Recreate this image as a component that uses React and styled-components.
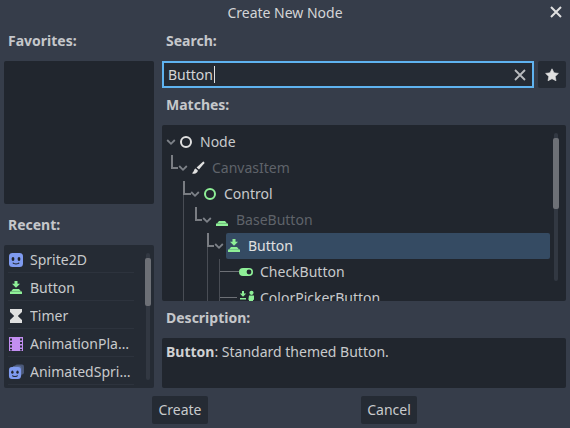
import React from "react";
import styled, { createGlobalStyle } from "styled-components";

const Global = createGlobalStyle`
  html, body { margin: 0; padding: 0; background: #363d4a; }
  body { width: 570px; height: 428px; overflow: hidden; font-family: "Noto Sans", sans-serif; font-size: 14px; color: #e0e0e0; }
`;

const Dialog = styled.div`
  width: 570px;
  height: 428px;
  background: #363d4a;
  display: flex;
  flex-direction: column;
`;
const TitleBar = styled.div`
  height: 24px;
  flex: none;
  display: flex;
  align-items: center;
  justify-content: center;
  position: relative;
  color: #d4d5d7;
  font-size: 14px;
`;
const CloseBtn = styled.svg`
  position: absolute;
  right: 8px;
  top: 6px;
`;
const Body = styled.div`
  flex: none;
  height: 364px;
  padding: 0 4px;
  display: grid;
  grid-template-columns: 150px 404px;
  column-gap: 8px;
`;
const Column = styled.div`
  display: flex;
  flex-direction: column;
  height: 364px;
`;
const Label = styled.div`
  font-weight: 700;
  font-size: 14px;
  color: #c5c7ca;
  height: 37px;
  flex: none;
  line-height: 34px;
  padding-left: 4px;
  margin-top: ${p => p.$top || 0}px;
`;
const Panel = styled.div`
  background: #21262e;
  border-radius: 2px;
  height: ${p => p.$h}px;
  flex: none;
  position: relative;
  overflow: hidden;
`;
const RecentList = styled.div`
  background: #252b34;
  height: 143px;
`;
const RecentRow = styled.div`
  height: 28px;
  margin: 0 20px 0 4px;
  padding-top: 3px;
  box-sizing: border-box;
  border-bottom: 1px solid #2d333d;
  display: flex;
  align-items: center;
  gap: 6px;
  color: #c8cacc;
  svg { flex: none; }
`;
const RecentText = styled.span`
  display: block;
  width: 103px;
  padding-bottom: 1px;
  white-space: nowrap;
  overflow: hidden;
  text-overflow: ellipsis;
`;
const Track = styled.div`
  position: absolute;
  width: 4px;
  border-radius: 2px;
  background: #323842;
  left: ${p => p.$x}px;
  top: ${p => p.$y}px;
  height: ${p => p.$h}px;
`;
const Thumb = styled.div`
  position: absolute;
  width: 6px;
  border-radius: 2px;
  background: #6d7076;
  left: ${p => p.$x}px;
  top: ${p => p.$y}px;
  height: ${p => p.$h}px;
`;
const SearchRow = styled.div`
  display: flex;
  gap: 4px;
  height: 27px;
  flex: none;
`;
const SearchBox = styled.div`
  flex: 1;
  box-sizing: border-box;
  background: #252b34;
  border: 2px solid #5fb3f0;
  display: flex;
  align-items: center;
  padding: 0 6px 0 4px;
  color: #d4d5d7;
`;
const SearchText = styled.span`
  flex: 1;
  display: flex;
  align-items: center;
  padding-bottom: 1px;
`;
const Caret = styled.span`
  display: inline-block;
  width: 1px;
  height: 17px;
  background: #e0e0e0;
  margin-left: 1px;
`;
const StarBtn = styled.div`
  width: 28px;
  background: #252b34;
  border-radius: 2px;
  display: flex;
  align-items: center;
  justify-content: center;
`;
const TreeWrap = styled.div`
  padding-top: 4px;
`;
const TreeRow = styled.div`
  height: 26px;
  display: flex;
  align-items: center;
  padding-left: ${p => p.$pad}px;
  white-space: nowrap;
  color: ${p => (p.$dim ? "#5f636a" : "#c8cacc")};
  svg { flex: none; }
`;
const Arrow = styled.svg`
  flex: none;
  margin-right: 2px;
`;
const RowLabel = styled.span`
  margin-left: ${p => p.$gap ?? 6}px;
  padding-bottom: 2px;
`;
const Selected = styled.div`
  display: flex;
  align-items: center;
  background: #354b63;
  border-radius: 2px;
  height: 26px;
  width: 324px;
  color: #e0e0e0;
`;
const Guides = styled.svg`
  position: absolute;
  left: 0;
  top: 0;
  pointer-events: none;
`;
const DescText = styled.div`
  padding: 4px;
  color: #c8cacc;
  line-height: 19px;
  b { font-weight: 700; color: #d0d1d3; }
`;
const Footer = styled.div`
  height: 28px;
  margin-top: 8px;
  flex: none;
  display: flex;
  padding-left: 152px;
  gap: 153px;
`;
const Button = styled.div`
  width: 56px;
  height: 28px;
  box-sizing: border-box;
  padding-bottom: 2px;
  background: #252b34;
  border-radius: 2px;
  display: flex;
  align-items: center;
  justify-content: center;
  color: #c8cacc;
`;

const GREEN = "#8eef97";

const IconBtn = () => (
  <svg width="16" height="16" viewBox="0 0 16 16">
    <path d="M6.5 1h3v2.8H12L8 7.8 4 3.8h2.5z" fill={GREEN} />
    <path d="M5 9h6l2 2.6H3z" fill={GREEN} />
    <rect x="2" y="11.5" width="12" height="2.5" fill={GREEN} />
  </svg>
);
const IconSprite = ({ s = 16, x = 0, y = 0 }) => (
  <g transform={`translate(${x} ${y}) scale(${s / 16})`}>
    <rect x="1" y="1" width="14" height="14" rx="3.5" fill="#7f9bf0" />
    <ellipse cx="5" cy="7" rx="1.4" ry="1.9" fill="#20242c" />
    <ellipse cx="11" cy="7" rx="1.4" ry="1.9" fill="#20242c" />
    <path d="M4.8 10.8c1 1.6 5.4 1.6 6.4 0" stroke="#20242c" strokeWidth="1.2" fill="none" />
  </g>
);
const Chevron = () => (
  <Arrow width="10" height="10" viewBox="0 0 10 10">
    <path d="M1.2 3 5 6.8 8.8 3" stroke="#7d8188" strokeWidth="1.8" fill="none" />
  </Arrow>
);
const X = ({ size, color, sw }) => (
  <svg width={size} height={size} viewBox="0 0 12 12">
    <path d="M1 1l10 10M11 1L1 11" stroke={color} strokeWidth={sw} />
  </svg>
);
const Ring = ({ color }) => (
  <svg width="16" height="16" viewBox="0 0 16 16">
    <circle cx="8" cy="8" r="5" stroke={color} strokeWidth="2" fill="none" />
  </svg>
);

export default function App() {
  return (
    <Dialog>
      <Global />
      <TitleBar>
        Create New Node
        <CloseBtn width="12" height="12" viewBox="0 0 12 12">
          <path d="M1 1l10 10M11 1L1 11" stroke="#e0e0e0" strokeWidth="2" />
        </CloseBtn>
      </TitleBar>
      <Body>
        <Column>
          <Label>Favorites:</Label>
          <Panel $h={143} />
          <Label $top={4}>Recent:</Label>
          <Panel $h={143}>
            <RecentList>
              <RecentRow>
                <svg width="16" height="16" viewBox="0 0 16 16"><IconSprite /></svg>
                <RecentText>Sprite2D</RecentText>
              </RecentRow>
              <RecentRow>
                <IconBtn />
                <RecentText>Button</RecentText>
              </RecentRow>
              <RecentRow>
                <svg width="16" height="16" viewBox="0 0 16 16">
                  <path d="M2 1h12v3l-4.2 4 4.2 4v3H2v-3l4.2-4L2 4z" fill="#e0e0e0" />
                </svg>
                <RecentText>Timer</RecentText>
              </RecentRow>
              <RecentRow>
                <svg width="16" height="16" viewBox="0 0 16 16">
                  <rect x="1" y="1" width="14" height="14" fill="#c38ef1" />
                  <path d="M2 2.5h2v2H2zM2 6h2v2H2zM2 9.5h2v2H2zM2 13h2v1.5H2zM12 2.5h2v2h-2zM12 6h2v2h-2zM12 9.5h2v2h-2zM12 13h2v1.5h-2z" fill="#252b34" />
                </svg>
                <RecentText>AnimationPlayer</RecentText>
              </RecentRow>
              <RecentRow>
                <svg width="16" height="16" viewBox="0 0 16 16">
                  <rect x="7" y="0.5" width="9" height="10" rx="2" fill="#4a5878" />
                  <rect x="4.5" y="1.8" width="9" height="11" rx="2" fill="#5a6c98" />
                  <IconSprite s={13.7} x={0.1} y={2.2} />
                </svg>
                <RecentText>AnimatedSprite2D</RecentText>
              </RecentRow>
            </RecentList>
            <Track $x={142} $y={8} $h={127} />
            <Thumb $x={141} $y={13} $h={48} />
          </Panel>
        </Column>
        <Column>
          <Label>Search:</Label>
          <SearchRow>
            <SearchBox>
              <SearchText>Button<Caret /></SearchText>
              <X size={12} color="#b9bbbe" sw={1.8} />
            </SearchBox>
            <StarBtn>
              <svg width="16" height="16" viewBox="0 0 16 16">
                <path d="M8 1.8l2 4 4.4.6-3.2 3 .8 4.4L8 11.7l-4 2.1.8-4.4-3.2-3 4.4-.6z" fill="#e0e0e0" stroke="#e0e0e0" strokeWidth="0.6" strokeLinejoin="round" />
              </svg>
            </StarBtn>
          </SearchRow>
          <Label>Matches:</Label>
          <Panel $h={176}>
            <TreeWrap>
              <TreeRow $pad={4}>
                <Chevron />
                <Ring color="#e0e0e0" />
                <RowLabel>Node</RowLabel>
              </TreeRow>
              <TreeRow $pad={16} $dim>
                <Chevron />
                <svg width="16" height="16" viewBox="0 0 16 16">
                  <path d="M13.2 1.5c1 .3 1.5 1.1 1.1 1.8L9 9.5 6.6 7.5z" fill="#e0e0e0" />
                  <path d="M5.6 8.5C3.6 8.9 4.6 11.6 2 13.2c2.4 1.2 5.4.4 5.9-2.6z" fill="#e0e0e0" />
                </svg>
                <RowLabel>CanvasItem</RowLabel>
              </TreeRow>
              <TreeRow $pad={28}>
                <Chevron />
                <Ring color={GREEN} />
                <RowLabel>Control</RowLabel>
              </TreeRow>
              <TreeRow $pad={40} $dim>
                <Chevron />
                <svg width="16" height="16" viewBox="0 0 16 16">
                  <path d="M5 9h6l2 2.6H3z" fill={GREEN} />
                  <rect x="2" y="11.5" width="12" height="2.5" fill={GREEN} />
                </svg>
                <RowLabel>BaseButton</RowLabel>
              </TreeRow>
              <TreeRow $pad={52}>
                <Chevron />
                <Selected>
                  <IconBtn />
                  <RowLabel>Button</RowLabel>
                </Selected>
              </TreeRow>
              <TreeRow $pad={76}>
                <svg width="16" height="16" viewBox="0 0 16 16">
                  <rect x="1" y="4" width="14" height="8" rx="4" fill={GREEN} />
                  <circle cx="11" cy="8" r="2.4" fill="#21262e" />
                </svg>
                <RowLabel>CheckButton</RowLabel>
              </TreeRow>
              <TreeRow $pad={76}>
                <svg width="18" height="16" viewBox="0 0 18 16">
                  <path d="M4 1h2v2.6h2.2L5 6.8 1.8 3.6H4zM2 8h6v1.6H2zM1 11h8v3H1z" fill={GREEN} />
                  <circle cx="13.5" cy="2.8" r="2.1" fill={GREEN} />
                  <path d="M11 5.5h5v4l-1 .8V14h-1.6v-3h-.8v3H11v-3.7l-.6-.8z" fill={GREEN} />
                </svg>
                <RowLabel $gap={4}>ColorPickerButton</RowLabel>
              </TreeRow>
            </TreeWrap>
            <Guides width="404" height="176" viewBox="0 0 404 176">
              <g stroke="#7a7d83" strokeWidth="2" fill="none" shapeRendering="crispEdges">
                <path d="M10 30v13H16" />
                <path d="M22 56v13H29" />
                <path d="M34 82v13H40" />
                <path d="M46 108v13H52" />
              </g>
              <g stroke="#494d55" strokeWidth="1" fill="none" shapeRendering="crispEdges">
                <path d="M21.5 70V176" />
                <path d="M45.5 122V176" />
                <path d="M57.5 134V176" />
              </g>
              <g stroke="#6d7076" strokeWidth="1" fill="none" shapeRendering="crispEdges">
                <path d="M57.5 146.5H77M57.5 172.5H75" />
              </g>
            </Guides>
            <Track $x={392} $y={8} $h={148} />
            <Thumb $x={391} $y={13} $h={71} />
          </Panel>
          <Label>Description:</Label>
          <Panel $h={50}>
            <DescText><b>Button</b>: Standard themed Button.</DescText>
          </Panel>
        </Column>
      </Body>
      <Footer>
        <Button>Create</Button>
        <Button>Cancel</Button>
      </Footer>
    </Dialog>
  );
}
